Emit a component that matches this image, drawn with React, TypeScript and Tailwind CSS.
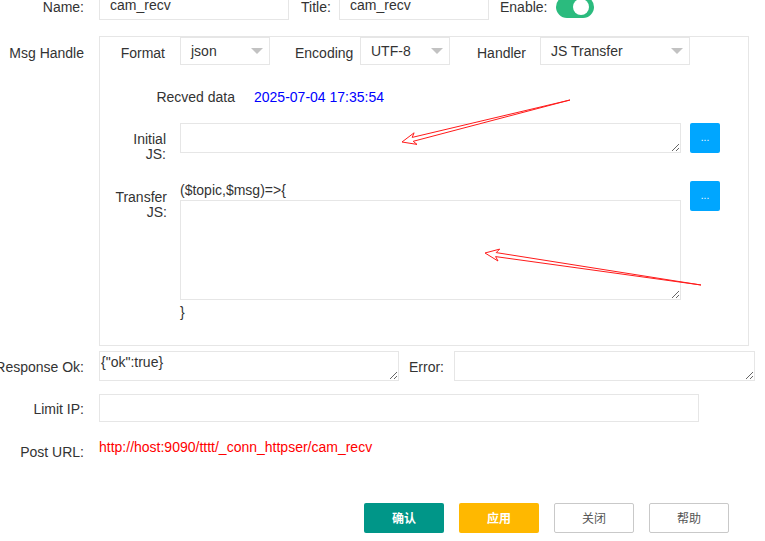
import React from 'react';

const font = { fontFamily: '"Liberation Sans", Arial, "Noto Sans CJK SC", sans-serif' };

const Select = ({ value, width }: { value: string; width: string }) => (
  <div className={`relative ${width} h-[28px] border border-[#e6e6e6] bg-white pl-[10px] leading-[26px] text-[#333]`}>
    {value}
    <span className="absolute right-[6px] top-[10px] w-0 h-0 border-l-[6px] border-r-[6px] border-t-[6px] border-l-transparent border-r-transparent border-t-[#c2c2c2]" />
  </div>
);

const DotsButton = () => (
  <button className="w-[30px] h-[30px] rounded-[2px] bg-[#00a6ff] text-white text-[10px] leading-[30px] flex items-center justify-center">
    ...
  </button>
);

const Arrows = () => (
  <svg className="absolute inset-0 pointer-events-none" width="765" height="541">
    <polygon
      points="402,142 417,144.4 413.2,141.3 570,100 412.2,137.4 414.1,132.8"
      fill="white"
      stroke="#ff1a1a"
      strokeWidth="1"
      strokeLinejoin="miter"
    />
    <polygon
      points="485,253 498,261 495.6,256.6 701,285 496.2,252.6 499.7,249.1"
      fill="white"
      stroke="#ff1a1a"
      strokeWidth="1"
      strokeLinejoin="miter"
    />
  </svg>
);

export default function App() {
  return (
    <div className="relative w-[765px] h-[541px] overflow-hidden bg-white text-[14px] text-[#333]" style={font}>
      {/* top row */}
      <div className="flex items-center h-[30px] mt-[-10px]">
        <div className="w-[99px] pr-[15px] text-right pt-[4px]">Name:</div>
        <input
          defaultValue="cam_recv"
          className="w-[190px] h-[30px] border border-[#e6e6e6] pl-[10px] text-[#333] outline-none"
        />
        <div className="ml-[12px] w-[38px] pt-[4px]">Title:</div>
        <input
          defaultValue="cam_recv"
          className="w-[150px] h-[30px] border border-[#e6e6e6] pl-[10px] text-[#333] outline-none"
        />
        <div className="ml-[11px] w-[56px] pt-[4px]">Enable:</div>
        <div className="relative w-[38px] h-[22px] rounded-full bg-[#2bbb7e] mt-[4px]">
          <span className="absolute right-[5px] top-[3px] w-[16px] h-[16px] rounded-full bg-white" />
        </div>
      </div>

      {/* msg handle */}
      <div className="flex mt-[16px]">
        <div className="w-[99px] pr-[15px] text-right pt-[7px]">Msg Handle</div>
        <div className="w-[650px] h-[310px] border border-[#e6e6e6]">
          <div className="flex items-center">
            <div className="w-[80px] pr-[15px] text-right pt-[4px]">Format</div>
            <Select value="json" width="w-[90px]" />
            <div className="ml-[25px] w-[65px] pt-[4px]">Encoding</div>
            <Select value="UTF-8" width="w-[90px]" />
            <div className="ml-[27px] w-[63px] pt-[4px]">Handler</div>
            <Select value="JS Transfer" width="w-[150px]" />
          </div>

          <div className="flex h-[20px] leading-[20px] mt-[22px]">
            <div className="w-[154px] pr-[19px] text-right">Recved data</div>
            <div className="text-[#0000ff]">2025-07-04 17:35:54</div>
          </div>

          <div className="flex h-[30px] mt-[16px]">
            <div className="w-[80px] pr-[14px] text-right leading-[15px] pt-[9px]">
              Initial
              <br />
              JS:
            </div>
            <textarea className="w-[501px] h-[30px] border border-[#e6e6e6] outline-none px-[2px]" />
            <div className="ml-[9px]">
              <DotsButton />
            </div>
          </div>

          <div className="flex mt-[28px]">
            <div className="w-[80px] pr-[13px] text-right leading-[15px] pt-[9px]">
              Transfer
              <br />
              JS:
            </div>
            <div className="w-[501px]">
              <div className="h-[20px] leading-[20px] mt-[-1px]">($topic,$msg)=&gt;{'{'}</div>
              <textarea className="block w-[501px] h-[100px] border border-[#e6e6e6] outline-none" />
              <div className="h-[20px] leading-[20px] mt-[2px]">{'}'}</div>
            </div>
            <div className="ml-[9px]">
              <DotsButton />
            </div>
          </div>
        </div>
      </div>

      {/* response */}
      <div className="flex mt-[5px]">
        <div className="w-[99px] pr-[15px] text-right whitespace-nowrap flex justify-end pt-[6px]">Response Ok:</div>
        <textarea
          defaultValue={'{"ok":true}'}
          className="w-[300px] h-[30px] border border-[#e6e6e6] outline-none pl-[1px] pt-[1px] leading-[18px] text-[#333]"
        />
        <div className="ml-[10px] w-[45px] pt-[6px]">Error:</div>
        <textarea className="w-[301px] h-[30px] border border-[#e6e6e6] outline-none" />
      </div>

      {/* limit ip */}
      <div className="flex items-center mt-[13px]">
        <div className="w-[99px] pr-[15px] text-right pt-[2px]">Limit IP:</div>
        <input className="w-[600px] h-[28px] border border-[#e6e6e6] outline-none" />
      </div>

      {/* post url */}
      <div className="flex mt-[15px]">
        <div className="w-[99px] pr-[15px] text-right pt-[5px] leading-[20px]">Post URL:</div>
        <div className="text-[#ff0000] leading-[20px]">http://host:9090/tttt/_conn_httpser/cam_recv</div>
      </div>

      {/* buttons */}
      <div className="flex gap-[15px] pl-[364px] mt-[41px]" style={{ fontFamily: '"Noto Sans CJK SC", sans-serif' }}>
        <button className="w-[80px] h-[30px] rounded-[2px] bg-[#009688] text-white text-[12px] font-bold">确认</button>
        <button className="w-[80px] h-[30px] rounded-[2px] bg-[#ffb800] text-white text-[12px] font-bold">应用</button>
        <button className="w-[80px] h-[30px] rounded-[2px] bg-white border border-[#c9c9c9] text-[#555] text-[12px]">关闭</button>
        <button className="w-[80px] h-[30px] rounded-[2px] bg-white border border-[#c9c9c9] text-[#555] text-[12px]">帮助</button>
      </div>

      <Arrows />
    </div>
  );
}
